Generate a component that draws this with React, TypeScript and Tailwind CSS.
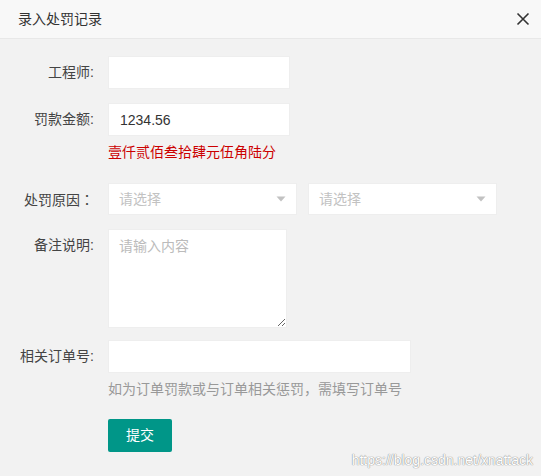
import React from "react";

const font = { fontFamily: '"Liberation Sans", "Noto Sans CJK SC", sans-serif' };

function Label({ children }: { children: React.ReactNode }) {
  return (
    <div className="w-[94px] shrink-0 text-right text-[14px] leading-[33px] text-[#444]">{children}</div>
  );
}

function Select() {
  return (
    <div className="flex h-[32px] w-[189px] items-center justify-between border border-[#eee] bg-white pl-[10px] pr-[10px]">
      <span className="text-[14px] text-[#c2c2c2]">请选择</span>
      <svg width="10" height="6" viewBox="0 0 10 6">
        <path d="M0.5 0.5 L9.5 0.5 L5 5.5 Z" fill="#c2c2c2" />
      </svg>
    </div>
  );
}

export default function App() {
  return (
    <div className="relative h-[476px] w-[541px] overflow-hidden bg-[#f2f2f2]" style={font}>
      <div className="flex h-[39px] items-center justify-between border-b border-[#e8e8e8] bg-[#f8f8f8] pl-[18px] pr-[11px]">
        <span className="text-[14px] text-[#333]">录入处罚记录</span>
        <svg width="14" height="14" viewBox="0 0 14 14">
          <path d="M1.5 1.5 L12.5 12.5 M12.5 1.5 L1.5 12.5" stroke="#333" strokeWidth="1.6" />
        </svg>
      </div>

      <div className="flex flex-col pt-[17px]">
        <div className="flex gap-[14px]">
          <Label>工程师:</Label>
          <input className="h-[33px] w-[182px] border border-[#eee] bg-white px-[12px] text-[14px] text-[#333] outline-none" />
        </div>

        <div className="mt-[14px] flex gap-[14px]">
          <Label>罚款金额:</Label>
          <div className="flex flex-col">
            <input
              defaultValue="1234.56"
              className="h-[33px] w-[182px] border border-[#eee] bg-white px-[11px] text-[14px] text-[#333] outline-none"
            />
            <div className="mt-[6px] text-[14px] leading-[20px] text-[#c00]">壹仟贰佰叁拾肆元伍角陆分</div>
          </div>
        </div>

        <div className="mt-[21px] flex gap-[14px]">
          <div className="w-[94px] shrink-0 text-right text-[14px] leading-[32px] text-[#444]">
            处罚原因<span style={{ fontFamily: '"Noto Sans CJK TC", sans-serif' }}>：</span>
          </div>
          <div className="flex gap-[11px]">
            <Select />
            <Select />
          </div>
        </div>

        <div className="mt-[13px] flex gap-[14px]">
          <Label>备注说明:</Label>
          <textarea
            placeholder="请输入内容"
            className="h-[99px] w-[179px] border border-[#eee] bg-white px-[10px] py-[6px] text-[14px] leading-[20px] text-[#333] outline-none placeholder:text-[#bbb]"
          />
        </div>

        <div className="mt-[12px] flex gap-[14px]">
          <Label>相关订单号:</Label>
          <div className="flex flex-col">
            <input className="h-[33px] w-[303px] border border-[#eee] bg-white px-[12px] text-[14px] text-[#333] outline-none" />
            <div className="mt-[6px] text-[14px] leading-[20px] text-[#999]">如为订单罚款或与订单相关惩罚，需填写订单号</div>
            <button className="mt-[20px] h-[33px] w-[64px] rounded-[2px] bg-[#009688] text-[14px] text-white">提交</button>
          </div>
        </div>
      </div>

      <div className="absolute bottom-[5px] right-[8px] text-[14px] text-white [text-shadow:0_0_1px_#888,0_0_1px_#888]">
        https://blog.csdn.net/xnattack
      </div>
    </div>
  );
}
